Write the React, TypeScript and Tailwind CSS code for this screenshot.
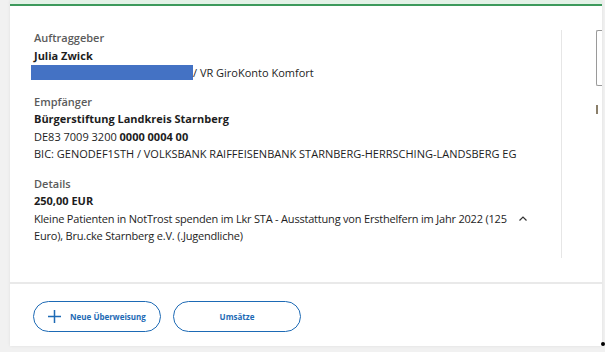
import React from "react";

export default function App() {
  const font = { fontFamily: '"Open Sans", "Liberation Sans", sans-serif' };
  return (
    <div className="w-[605px] h-[352px] bg-[#f1f1f1] overflow-hidden relative" style={font}>
      <div className="ml-[10px] w-[592px] h-[346px] bg-white flex flex-col shadow-[0_0_3px_rgba(0,0,0,0.08)]">
        <div className="h-[4px] bg-[#e3f2e7]" />
        <div className="h-[2px] bg-[#3d9a5c]" />
        <div className="flex h-[276px]">
          <div className="w-[552px] pl-[24px] pt-[23px] text-[11px] leading-[17.5px] text-[#1d1d1d]">
            <div className="font-semibold text-[#5b5b5b]">Auftraggeber</div>
            <div className="font-bold">Julia Zwick</div>
            <div className="flex items-center">
              <div className="ml-[-3px] w-[162px] h-[15px] bg-[#4472c4]" />
              <span>/ VR GiroKonto Komfort</span>
            </div>
            <div className="mt-[11px] font-semibold text-[#5b5b5b]">Empfänger</div>
            <div className="font-bold">Bürgerstiftung Landkreis Starnberg</div>
            <div>
              DE83 7009 3200 <span className="font-bold">0000 0004 00</span>
            </div>
            <div>BIC: GENODEF1STH / VOLKSBANK RAIFFEISENBANK STARNBERG-HERRSCHING-LANDSBERG EG</div>
            <div className="mt-[12px] font-semibold text-[#5b5b5b]">Details</div>
            <div className="font-bold">250,00 EUR</div>
            <div className="flex items-start w-[494px]">
              <div className="flex-1 tracking-[-0.2px]">
                Kleine Patienten in NotTrost spenden im Lkr STA - Ausstattung von Ersthelfern im Jahr 2022 (125 Euro), Bru.cke Starnberg e.V. (.Jugendliche)
              </div>
              <svg width="10" height="10" viewBox="0 0 10 10" className="mt-[4px] ml-[4px]">
                <path d="M1.5 6.5 L5 3 L8.5 6.5" stroke="#333" strokeWidth="1.2" fill="none" />
              </svg>
            </div>
          </div>
          <div className="mt-[24px] h-[228px] w-[1px] bg-[#e6e6e6]" />
          <div className="flex-1 pl-[34px] pt-[24px]">
            <div className="w-[6px] h-[56px] border-l border-t border-b border-[#9a9a9a] rounded-l-[2px]" />
            <div className="mt-[19px] w-[2px] h-[9px] bg-[#8a7f6a]" />
          </div>
        </div>
        <div className="h-[2px] bg-[#e9e9e9]" />
        <div className="flex gap-[12px] pl-[23px] pt-[17px]">
          <button className="w-[128px] h-[31px] rounded-full border-[1.5px] border-[#1d6ab5] flex items-center justify-center gap-[9px] text-[#1d6ab5] text-[8px] font-bold">
            <svg width="13" height="13" viewBox="0 0 13 13">
              <path d="M6.5 0 V13 M0 6.5 H13" stroke="#1d6ab5" strokeWidth="1.5" />
            </svg>
            <span>Neue Überweisung</span>
          </button>
          <button className="w-[128px] h-[31px] rounded-full border-[1.5px] border-[#1d6ab5] flex items-center justify-center text-[#1d6ab5] text-[8px] font-bold">
            Umsätze
          </button>
        </div>
      </div>
      <div className="absolute right-[0px] top-[342px] w-[4px] h-[4px] rounded-full bg-black" />
    </div>
  );
}
